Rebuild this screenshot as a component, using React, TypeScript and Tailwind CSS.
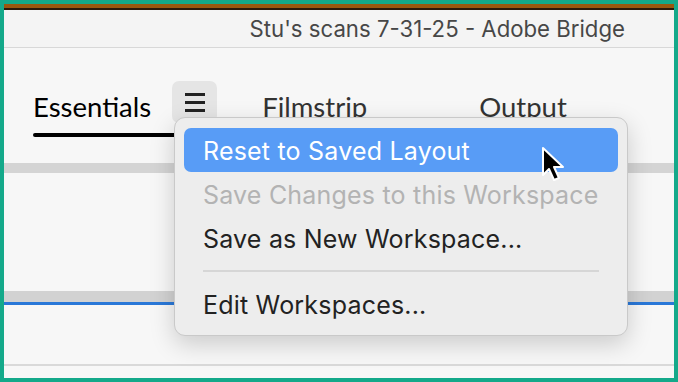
const font = { fontFamily: 'Inter, "Noto Sans", sans-serif' };
const tabFont = { fontFamily: 'Lato, "Noto Sans", sans-serif' };

function Cursor() {
  return (
    <svg width="26" height="38" viewBox="0 0 26 38" className="absolute left-[541px] top-[146px]">
      <path
        d="M2 2 L2 29 L8 23 L13 34 L18 32 L13 21 L22 21 Z"
        fill="#000"
        stroke="#fff"
        strokeWidth="2"
        strokeLinejoin="round"
      />
    </svg>
  );
}

function MenuItem({ label, active, disabled }: { label: string; active?: boolean; disabled?: boolean }) {
  const color = active ? 'text-white bg-[#589cf6]' : disabled ? 'text-[#b3b3b3]' : 'text-[#222]';
  return (
    <div className={`h-[44px] flex items-center pl-[19px] pt-[3px] rounded-[7px] text-[25px] tracking-[0.2px] ${color}`}>
      {label}
    </div>
  );
}

export default function App() {
  return (
    <div className="relative w-[678px] h-[382px] bg-[#14a98a] p-[4px] overflow-hidden" style={font}>
      <div className="flex flex-col h-full bg-[#f7f7f7]">
        <div className="h-[4px] bg-[#9a5810]" />
        <div className="h-[2px] bg-[#2b1a0c]" />
        <div className="h-[38px] flex items-center justify-end pr-[49px] bg-[#f4f4f4] border-b border-[#d8d8d8] text-[22.2px] text-[#474747]">
          Stu's scans 7-31-25 - Adobe Bridge
        </div>

        <div className="h-[115px] relative flex items-end pl-[29px]" style={tabFont}>
          <div className="flex flex-col mb-[26px]">
            <div className="flex items-end">
              <span className="text-[27.5px] text-black leading-none pb-[3px]">Essentials</span>
              <div className="ml-[21px] w-[45px] h-[42px] rounded-[7px] bg-[#e5e5e5] flex flex-col items-center pt-[12px] gap-[5px] self-start -mt-[2px]">
                <div className="w-[20px] h-[3px] bg-[#222]" />
                <div className="w-[20px] h-[3px] bg-[#222]" />
                <div className="w-[20px] h-[3px] bg-[#222]" />
              </div>
              <span className="ml-[45px] text-[27.5px] text-[#333] leading-none pb-[3px]">Filmstrip</span>
              <span className="ml-[112px] text-[27.5px] text-[#333] leading-none pb-[3px]">Output</span>
            </div>
            <div className="mt-[10px] w-[150px] h-[4px] rounded-full bg-black" />
          </div>
        </div>

        <div className="h-[10px] bg-[#d4d4d4]" />
        <div className="h-[118px]" />
        <div className="h-[11px] bg-[#d2d2d2]" />
        <div className="h-[3px] bg-[#2a78d8]" />
        <div className="h-[59px]" />
        <div className="h-[2px] bg-[#d9d9d9]" />
        <div className="flex-1" />
      </div>

      <div className="absolute left-[174px] top-[117px] w-[454px] h-[219px] rounded-[11px] bg-[#ededed] border border-[#c9c9c9] shadow-[0_8px_24px_rgba(0,0,0,0.18)] px-[9px] pt-[10px]">
        <MenuItem label="Reset to Saved Layout" active />
        <MenuItem label="Save Changes to this Workspace" disabled />
        <MenuItem label="Save as New Workspace..." />
        <div className="h-[22px] flex items-center px-[19px]">
          <div className="h-[2px] w-full bg-[#d6d6d6]" />
        </div>
        <MenuItem label="Edit Workspaces..." />
      </div>

      <Cursor />
    </div>
  );
}
